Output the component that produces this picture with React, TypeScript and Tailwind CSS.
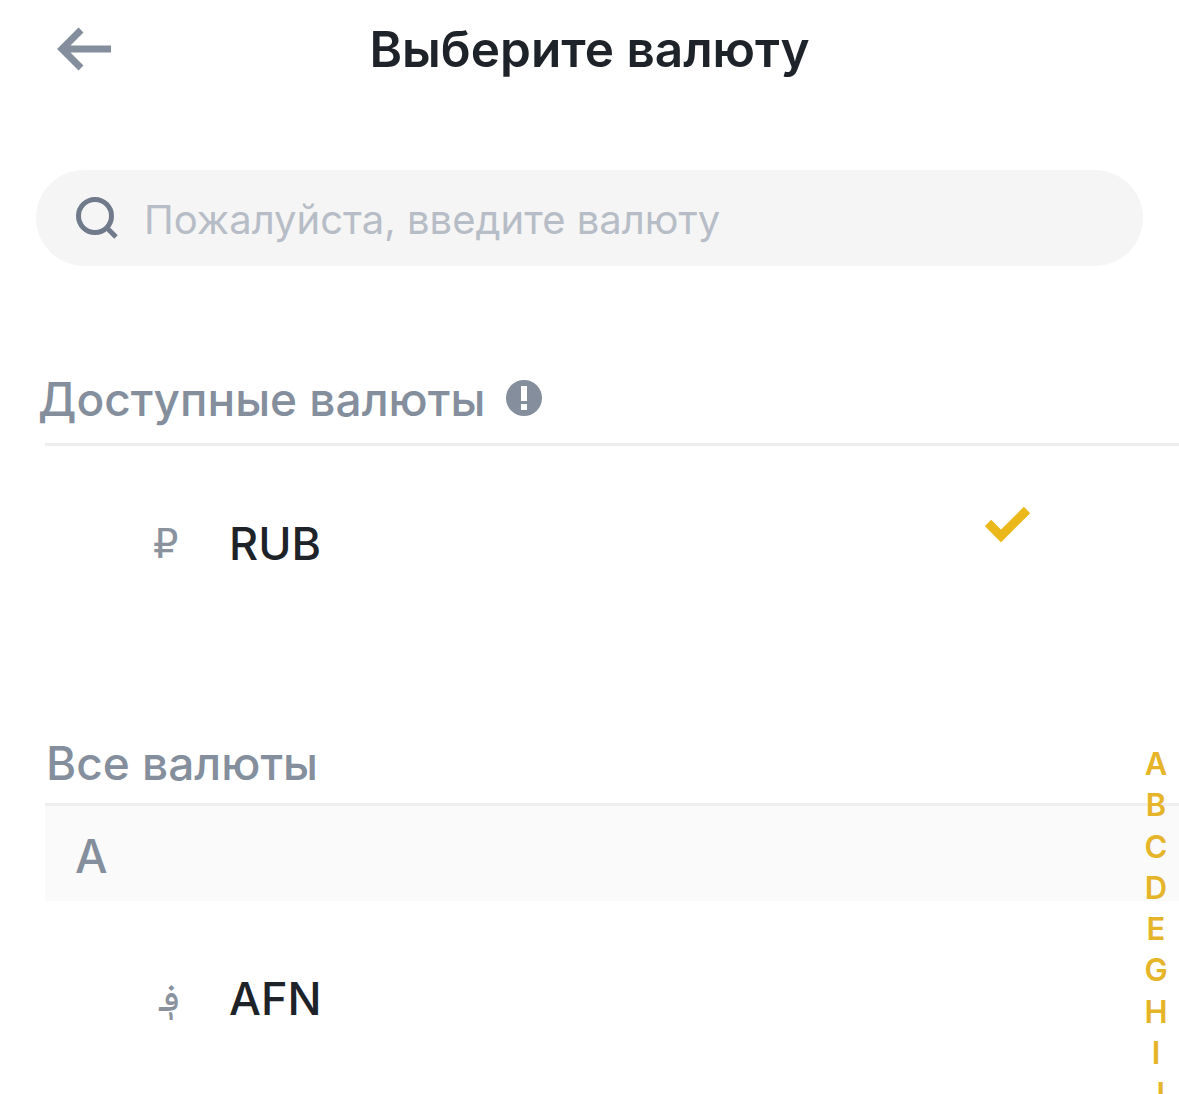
const letters = ['A', 'B', 'C', 'D', 'E', 'G', 'H', 'I', 'J'];

function CurrencyRow({ symbol, symbolClass, code, selected }: { symbol: string; symbolClass: string; code: string; selected?: boolean }) {
  return (
    <div className="flex h-[200px] items-center pb-[5px] pl-[153px] pr-[148px]">
      <span className={symbolClass}>{symbol}</span>
      <span className="flex-1 text-[45px] font-medium leading-none text-[#1e2329]">{code}</span>
      {selected && (
        <svg width="46" height="38" viewBox="0 0 46 38" className="mt-[-41px]">
          <path d="M3 19 L16 32 L42 6" fill="none" stroke="#ebb81c" strokeWidth="9" />
        </svg>
      )}
    </div>
  );
}

export default function App() {
  return (
    <div className="relative h-[1094px] w-[1179px] overflow-hidden bg-white font-['Inter',sans-serif]">
      {/* Header */}
      <div className="relative flex h-[100px] items-center justify-center">
        <svg width="56" height="46" viewBox="0 0 56 46" className="absolute left-[57px] top-[26px]">
          <path d="M54 23 H6 M24 4 L5 23 L24 42" fill="none" stroke="#848e9c" strokeWidth="7" />
        </svg>
        <h1 className="text-[49.5px] font-semibold leading-none text-[#1e2329]">Выберите валюту</h1>
      </div>

      {/* Search */}
      <div className="ml-[36px] mt-[70px] flex h-[96px] w-[1107px] items-center rounded-[48px] bg-[#f5f5f5] pl-[39px]">
        <svg width="44" height="44" viewBox="0 0 44 44">
          <circle cx="20" cy="20" r="16.5" fill="none" stroke="#707a8a" strokeWidth="5" />
          <path d="M31 31 L41 41" fill="none" stroke="#707a8a" strokeWidth="5" />
        </svg>
        <span className="ml-[25px] mt-[4px] text-[40px] leading-none text-[#b7bdc6]">Пожалуйста, введите валюту</span>
      </div>

      {/* Available */}
      <div className="ml-[38px] mt-[108px] flex h-[52px] items-center gap-[20px]">
        <span className="mt-[-2px] text-[46px] font-medium leading-none text-[#848e9c]">Доступные валюты</span>
        <svg width="38" height="38" viewBox="0 0 38 38" className="mt-[-4px]">
          <circle cx="19" cy="19" r="18" fill="#848e9c" />
          <rect x="16" y="7" width="6" height="15" fill="#fff" />
          <rect x="16" y="25" width="6" height="6" fill="#fff" />
        </svg>
      </div>
      <div className="ml-[45px] mt-[17px] h-[3px] bg-[#eeeeee]" />
      <CurrencyRow
        symbol="₽"
        symbolClass="w-[76px] text-[40px] text-[#8a929e] font-['DejaVu_Sans',sans-serif]"
        code="RUB"
        selected
      />

      {/* All */}
      <div className="ml-[46px] mt-[91px] h-[52px] text-[46px] font-medium leading-[52px] text-[#848e9c]">Все валюты</div>
      <div className="ml-[45px] mt-[14px] h-[3px] bg-[#eeeeee]" />
      <div className="ml-[45px] flex h-[95px] items-center bg-[#fafafa] pl-[30px] pt-[4px] text-[46px] font-medium leading-none text-[#848e9c]">A</div>
      <CurrencyRow
        symbol="؋"
        symbolClass="w-[76px] pl-[6px] text-[38px] text-[#8a929e] font-['DejaVu_Sans',sans-serif]"
        code="AFN"
      />

      {/* Alphabet index */}
      <div className="absolute left-[1136px] top-[743px] flex w-[40px] flex-col items-center text-[31px] font-semibold leading-[41.3px] text-[#e5b429]">
        {letters.map((l) => (
          <span key={l}>{l}</span>
        ))}
      </div>
    </div>
  );
}
